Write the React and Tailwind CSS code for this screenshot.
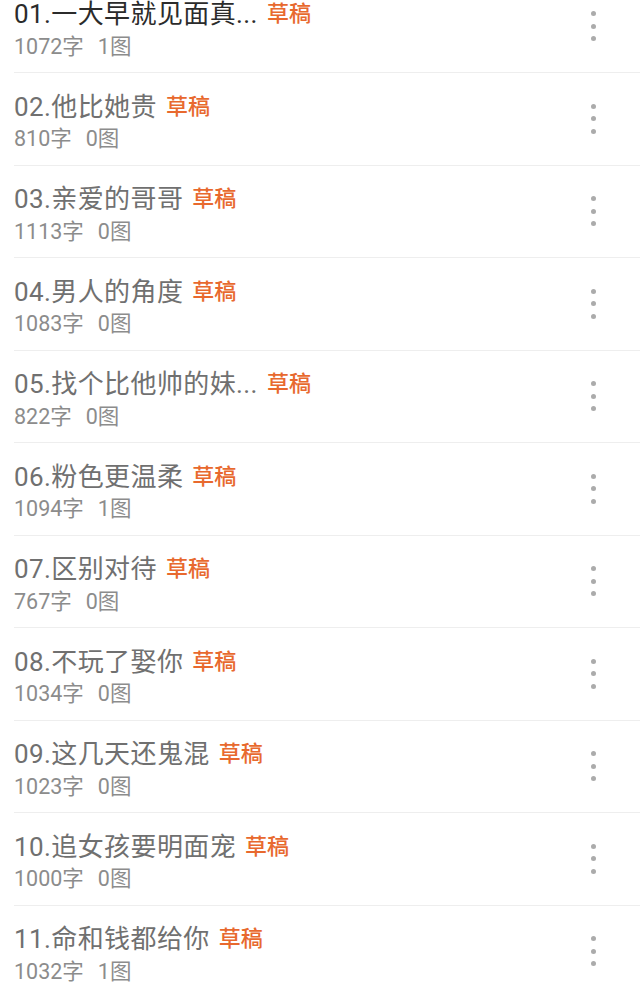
import React from 'react';

const chapters = [
  { no: '01', title: '一大早就见面真...', words: 1072, pics: 1 },
  { no: '02', title: '他比她贵', words: 810, pics: 0 },
  { no: '03', title: '亲爱的哥哥', words: 1113, pics: 0 },
  { no: '04', title: '男人的角度', words: 1083, pics: 0 },
  { no: '05', title: '找个比他帅的妹...', words: 822, pics: 0 },
  { no: '06', title: '粉色更温柔', words: 1094, pics: 1 },
  { no: '07', title: '区别对待', words: 767, pics: 0 },
  { no: '08', title: '不玩了娶你', words: 1034, pics: 0 },
  { no: '09', title: '这几天还鬼混', words: 1023, pics: 0 },
  { no: '10', title: '追女孩要明面宠', words: 1000, pics: 0 },
  { no: '11', title: '命和钱都给你', words: 1032, pics: 1 },
];

const MoreButton = () => (
  <button className="flex flex-col items-center gap-[7.5px] w-[20px] py-2">
    <span className="w-[5px] h-[5px] rounded-full bg-[#ababab]"></span>
    <span className="w-[5px] h-[5px] rounded-full bg-[#ababab]"></span>
    <span className="w-[5px] h-[5px] rounded-full bg-[#ababab]"></span>
  </button>
);

const ChapterRow = ({ chapter, active }) => (
  <div className="ml-[14px] h-[92.5px] flex border-b border-[#eeeeee]">
    <div className="flex-1 min-w-0 pt-[21.5px]">
      <div className="flex items-center h-[24px]">
        <span className={`text-[26px] leading-[24px] tracking-[0.4px] ${active ? 'text-[#2b2b2b]' : 'text-[#707070]'}`}>
          {chapter.no}.{chapter.title}
        </span>
        <span className="ml-[9px] text-[22px] leading-[24px] font-medium text-[#e8692e]">草稿</span>
      </div>
      <div className="mt-[5.5px] flex items-center h-[30px] text-[21.5px] leading-[30px] text-[#8c8c8c]">
        <span>{chapter.words}字</span>
        <span className="ml-[14px]">{chapter.pics}图</span>
      </div>
    </div>
    <div className="self-center mr-[37px]">
      <MoreButton />
    </div>
  </div>
);

export default function App() {
  return (
    <div
      className="w-[640px] h-[991px] overflow-hidden bg-white"
      style={{ fontFamily: 'Roboto, "Noto Sans CJK SC", sans-serif' }}
    >
      {/* list is scrolled a bit, first row partly hidden */}
      <div className="-mt-[19.5px]">
        {chapters.map((c, i) => (
          <ChapterRow key={c.no} chapter={c} active={i === 0} />
        ))}
      </div>
    </div>
  );
}
